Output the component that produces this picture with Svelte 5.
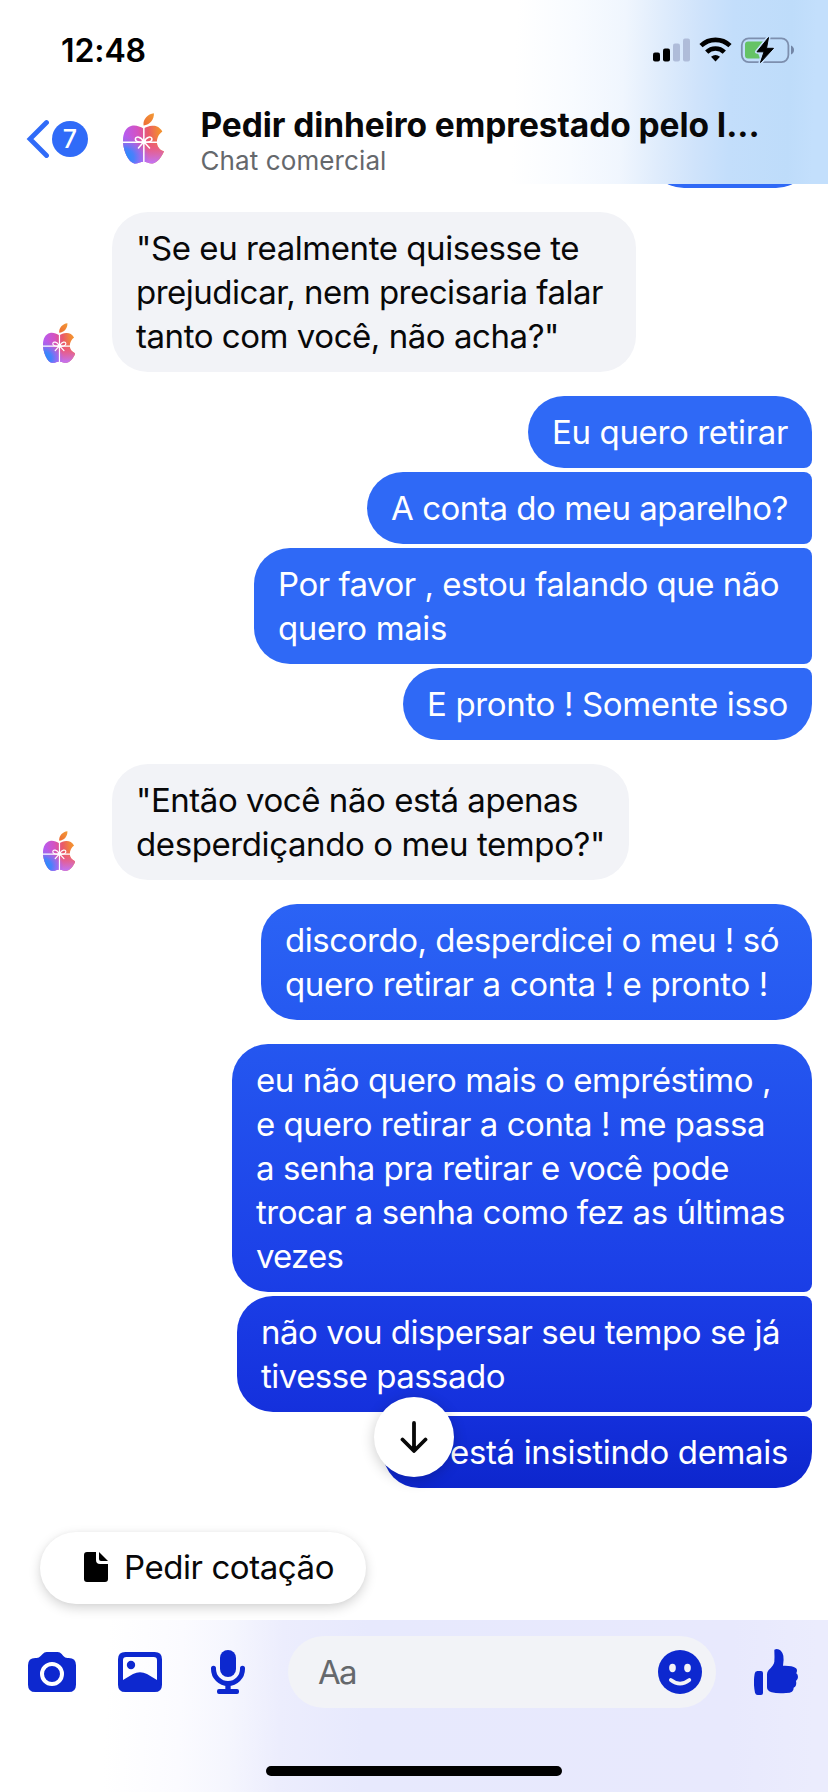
<script>
  const groups = [
    {
      side: 'in',
      items: [
        {
          w: 524,
          lines: [
            ['"Se eu realmente quisesse te', 443],
            ['prejudicar, nem precisaria falar', 467],
            ['tanto com você, não acha?"', 423]
          ]
        }
      ]
    },
    {
      side: 'out',
      items: [
        { w: 284, lines: [['Eu quero retirar', 236]] },
        { w: 445, lines: [['A conta do meu aparelho?', 397]] },
        { w: 558, lines: [['Por favor , estou falando que não', 501], ['quero mais', 169]] },
        { w: 409, lines: [['E pronto ! Somente isso', 361]] }
      ]
    },
    {
      side: 'in',
      items: [{ w: 517, lines: [['"Então você não está apenas', 442], ['desperdiçando o meu tempo?"', 469]] }]
    },
    {
      side: 'out',
      items: [{ w: 551, lines: [['discordo, desperdicei o meu ! só', 494], ['quero retirar a conta ! e pronto !', 483]] }]
    },
    {
      side: 'out',
      items: [
        {
          w: 580,
          lines: [
            ['eu não quero mais o empréstimo ,', 515],
            ['e quero retirar a conta ! me passa', 509],
            ['a senha pra retirar e você pode', 473],
            ['trocar a senha como fez as últimas', 529],
            ['vezes', 87]
          ]
        },
        { w: 575, lines: [['não vou dispersar seu tempo se já', 519], ['tivesse passado', 244]] },
        { w: 429, end: true, lines: [['está insistindo demais', 338]] }
      ]
    }
  ];

  // Tracks a line of text so that its advance equals the given width.
  function fit(node, width) {
    const natural = node.getBoundingClientRect().width;
    const count = [...node.textContent].length;
    node.style.letterSpacing = `${(width - natural) / count}px`;
  }
</script>

{#snippet logo(id, size)}
  <svg class="logo" width={size} height={size * 1.25} viewBox="38 38 122 152.5">
    <defs>
      <linearGradient id="{id}a" x1="0" y1="0.1" x2="1" y2="0">
        <stop offset="0" stop-color="#b65cf2" />
        <stop offset="0.35" stop-color="#d452c0" />
        <stop offset="0.6" stop-color="#ea5a68" />
        <stop offset="0.85" stop-color="#f28a35" />
        <stop offset="1" stop-color="#f39a2c" />
      </linearGradient>
      <linearGradient id="{id}e" x1="0" y1="0" x2="0" y2="1">
        <stop offset="0.3" stop-color="#ee5570" stop-opacity="0" />
        <stop offset="0.6" stop-color="#e85c8c" stop-opacity="0.85" />
        <stop offset="1" stop-color="#c074f8" />
      </linearGradient>
      <radialGradient id="{id}b" cx="0.02" cy="0.85" r="0.62">
        <stop offset="0" stop-color="#1a90fc" />
        <stop offset="0.4" stop-color="#4a80fb" />
        <stop offset="0.7" stop-color="#8c6cf8" stop-opacity="0.8" />
        <stop offset="1" stop-color="#b060f5" stop-opacity="0" />
      </radialGradient>
      <linearGradient id="{id}d" x1="0" y1="1" x2="1" y2="0">
        <stop offset="0" stop-color="#ee6b35" />
        <stop offset="1" stop-color="#f29a35" />
      </linearGradient>
      <path
        id="{id}p"
        d="M99 84C88 78 76 73 64 76C47 80 38 97 38 120C38 150 55 186 72 188C82 189 90 183 99 183C108 183 116 189 126 188C140 187 154 168 160 152C146 147 139 138 139 124C139 110 146 100 155 93C148 80 136 75 125 76C115 76 107 81 99 84Z"
      />
    </defs>
    <use href="#{id}p" fill="url(#{id}a)" />
    <use href="#{id}p" fill="url(#{id}e)" />
    <use href="#{id}p" fill="url(#{id}b)" />
    <path d="M99 75C97 56 112 41 130 39C131 57 118 74 99 75Z" fill="url(#{id}d)" />
    <g fill="none" stroke="#fff" stroke-width="4.5" stroke-linecap="round">
      <path d="M100 78V190M36 125H142" />
      <path
        d="M98 124C86 126 74 124 75 115C76 107 92 107 98 122M102 124C114 126 125 124 124 115C123 107 108 107 102 122M98 126L84 142M102 126L117 142"
      />
    </g>
    <circle cx="100" cy="124" r="7" fill="#fff" />
  </svg>
{/snippet}

<div class="screen">
  <header>
    <div class="status">
      <div class="time"><span use:fit={85}>12:48</span></div>
      <svg width="142" height="26" viewBox="653 36.5 142 26">
        <rect x="653" y="52" width="7" height="9" rx="2" />
        <rect x="663" y="48" width="7" height="13" rx="2" />
        <g fill="#afbcd9">
          <rect x="673" y="43" width="7" height="18" rx="2" />
          <rect x="683" y="38" width="7" height="23" rx="2" />
        </g>
        <g fill="none" stroke="#000" stroke-width="4.6">
          <path d="M701 45.2A21 21 0 0 1 730 45.2" />
          <path d="M706.7 51.6A12.6 12.6 0 0 1 724.3 51.6" />
        </g>
        <path d="M711 56.3Q715.500 52.600 720 56.3L715.5 61Z" />
        <rect x="741.8" y="37.8" width="46.6" height="23.8" rx="7" fill="none" stroke="#7d8fae" stroke-width="1.8" />
        <path d="M791 45V54Q794 52.5 794 49.5T791 45Z" fill="#7386a6" />
        <path d="M748 41H763L757 50L760 58H748Q745 58 745 55V44Q745 41 748 41Z" fill="#65c366" />
        <path
          d="M768.5 37L757 51.3H763.5L760.5 62L773.5 47.5H766.5Z"
          stroke="#c3defb"
          stroke-width="4"
          stroke-linejoin="round"
        />
        <path d="M768.5 37L757 51.3H764L760.5 62L773.5 47.8H766.5Z" stroke="#000" stroke-linejoin="round" />
      </svg>
    </div>
    <div class="bar">
      <svg class="back" width="24" height="44" viewBox="0 0 24 44">
        <path d="M21.5 5.500L5 22L21.5 38.5" fill="none" stroke="#306bf8" stroke-width="4.8" stroke-linecap="round" />
      </svg>
      <div class="count">7</div>
      {@render logo('h', 41)}
      <div class="names">
        <div class="title"><span use:fit={559}>Pedir dinheiro emprestado pelo I...</span></div>
        <div class="sub"><span use:fit={186}>Chat comercial</span></div>
      </div>
    </div>
  </header>

  <main>
    <div class="group out"><div class="bubble cut"></div></div>
    {#each groups as g, gi}
      <div class="group {g.side}">
        {#if g.side === 'in'}
          <div class="avatar">{@render logo('g' + gi, 32.4)}</div>
        {/if}
        {#each g.items as b}
          <div class="bubble" class:end={b.end} style="width: {b.w}px">
            {#each b.lines as [text, width]}
              <div class="line"><span use:fit={width}>{text}</span></div>
            {/each}
          </div>
        {/each}
      </div>
    {/each}
    <button class="chip">
      <svg width="24" height="30" viewBox="0 0 24 30">
        <path d="M3 0H12V8Q12 12 16 12H24V27Q24 30 21 30H3Q0 30 0 27V3Q0 0 3 0Z" />
        <path d="M15 0L24 9H17Q15 9 15 7Z" />
      </svg>
      <span use:fit={210}>Pedir cotação</span>
    </button>
    <button class="down" aria-label="Rolar para baixo">
      <svg width="28" height="32" viewBox="0 0 28 32">
        <path
          d="M14 2V29M2.5 18.5L14 30L25.5 18.5"
          fill="none"
          stroke="#080808"
          stroke-width="3.8"
          stroke-linecap="round"
          stroke-linejoin="round"
        />
      </svg>
    </button>
  </main>

  <footer>
    <div class="tools">
      <svg width="48" height="40" viewBox="84 816 144 120">
        <path
          fill-rule="evenodd"
          d="M140 816H173Q180 816 185 822L190 828Q195 834 202 834H206Q228 834 228 856V914Q228 936 206 936H106Q84 936 84 914V856Q84 834 106 834H110Q117 834 122 828L128 822Q133 816 140 816ZM156 846A36 36 0 1 0 156 918A36 36 0 1 0 156 846ZM156 858A24 24 0 1 1 156 906A24 24 0 1 1 156 858Z"
        />
      </svg>
      <svg width="44" height="40" viewBox="354 816 132 120">
        <path
          fill-rule="evenodd"
          d="M376 816H464Q486 816 486 838V914Q486 936 464 936H376Q354 936 354 914V838Q354 816 376 816ZM379 831Q369 831 369 841V900L399 882Q420 871 441 882L471 900V841Q471 831 461 831Z"
        />
        <circle cx="393" cy="855" r="12.5" />
      </svg>
      <svg width="34" height="44" viewBox="633 810 102 132">
        <rect x="660" y="810" width="48" height="81" rx="24" />
        <path d="M640.5 865V867A43.5 43.5 0 0 0 727.5 867V865" fill="none" stroke="#0d28cf" stroke-width="15" stroke-linecap="round" />
        <path d="M676 912H692V927H711Q717 927 717 933V936Q717 942 711 942H657Q651 942 651 936V933Q651 927 657 927H676Z" />
      </svg>
    </div>
    <div class="input">
      <span use:fit={38}>Aa</span>
      <svg width="44" height="44" viewBox="732 810 132 132">
        <circle cx="798" cy="876" r="66" />
        <g fill="#f2f3f7">
          <ellipse cx="775.5" cy="864" rx="10" ry="12.5" />
          <ellipse cx="820.5" cy="864" rx="10" ry="12.5" />
        </g>
        <path d="M770.5 900Q798 922 826 900" fill="none" stroke="#f2f3f7" stroke-width="11" stroke-linecap="round" />
      </svg>
    </div>
    <svg class="like" width="44" height="46" viewBox="1020 804 132 138">
      <path d="M1030 870H1041Q1047 870 1047 876V936Q1047 942 1041 942H1031Q1025 942 1023 935Q1017 907 1022 878Q1023 870 1030 870Z" />
      <path
        d="M1081 809Q1080 804 1088 804Q1103 805 1108 824Q1110 835 1107 854Q1134 853 1145 861Q1151 865 1148 874Q1147 876 1147 877Q1152 881 1152 888Q1152 895 1146 900Q1148 908 1146 913Q1144 918 1139 920Q1139 929 1134 932Q1129 936 1116 936Q1090 938 1073 934Q1059 930 1059 919V880Q1059 872 1064 867Q1080 852 1081 842Q1082 829 1081 809Z"
      />
    </svg>
    <div class="home"></div>
  </footer>
</div>

<style>
  :global(body) {
    background: #fff;
  }
  .screen {
    width: 828px;
    height: 1792px;
    display: flex;
    flex-direction: column;
    overflow: hidden;
    font-family: Inter, 'Liberation Sans', sans-serif;
    font-size: 33px;
    color: #080809;
  }
  svg {
    display: block;
    flex: none;
  }
  span {
    white-space: pre;
  }
  button {
    border: 0;
    padding: 0;
    font: inherit;
    color: inherit;
    background: #fff;
  }
  header {
    height: 184px;
    flex: none;
    box-sizing: border-box;
    padding-top: 30px;
    background: linear-gradient(
      92deg,
      #fff 62%,
      #f8fbff 69%,
      #f0f6fe 75%,
      #dfecfc 79.5%,
      #cfe3fb 84%,
      #c3defb 88%,
      #bedcfa 95%,
      #c3dffc 98%
    );
  }
  .status {
    height: 40px;
    padding: 0 33px 0 61px;
    display: flex;
    justify-content: space-between;
    align-items: center;
  }
  .time {
    font-size: 32px;
    font-weight: 600;
    color: #000;
  }
  .bar {
    height: 78px;
    padding-left: 25px;
    display: flex;
    align-items: flex-start;
  }
  .bar .back {
    margin-top: 47px;
  }
  .count {
    width: 36px;
    height: 36px;
    margin: 51px 0 0 3px;
    border-radius: 50%;
    background: #306bf8;
    color: #fff;
    font-size: 25px;
    font-weight: 500;
    line-height: 37px;
    text-align: center;
  }
  .bar .logo {
    margin: 43px 0 0 34.5px;
  }
  .names {
    margin: 35px 0 0 37px;
  }
  .title {
    font-weight: 650;
    font-size: 33.5px;
    line-height: 40px;
  }
  .sub {
    font-size: 26px;
    line-height: 32px;
    color: #65686c;
  }
  main {
    position: relative;
    height: 1436px;
    flex: none;
    box-sizing: border-box;
    padding: 0 16px;
    display: flex;
    flex-direction: column;
    gap: 24px;
    overflow: hidden;
  }
  .group {
    display: flex;
    flex-direction: column;
    gap: 4px;
    align-items: flex-end;
  }
  .group.in {
    flex-direction: row;
    gap: 0;
  }
  .avatar {
    width: 69px;
    padding: 0 0 9px 27px;
    box-sizing: border-box;
    margin-right: 27px;
  }
  .bubble {
    box-sizing: border-box;
    padding: 14px 24px;
    border-radius: 36px;
    line-height: 44px;
    background: #f2f3f7;
  }
  .line {
    height: 44px;
  }
  .out .bubble {
    color: #fff;
    background: linear-gradient(
        #2f69f6 0,
        #2f69f6 740px,
        #2b63f5 904px,
        #2558f0 1030px,
        #1c41e8 1260px,
        #1531dd 1405px,
        #0d26cd 1490px
      )
      0 0 / 828px 1792px fixed;
  }
  .out .bubble:not(:last-child) {
    border-bottom-right-radius: 8px;
  }
  .out .bubble:not(:first-child) {
    border-top-right-radius: 8px;
  }
  .cut {
    width: 164px;
    height: 72px;
    margin-top: -68px;
  }
  .end {
    text-align: right;
  }
  .chip {
    align-self: flex-start;
    margin: 20px 0 0 24px;
    width: 326px;
    height: 72px;
    border-radius: 36px;
    display: flex;
    align-items: center;
    gap: 16px;
    padding: 0 0 2px 44px;
    box-sizing: border-box;
    box-shadow:
      0 4px 12px rgba(0, 0, 0, 0.17),
      0 0 4px rgba(0, 0, 0, 0.03);
  }
  .down {
    position: absolute;
    left: 374px;
    top: 1213px;
    width: 80px;
    height: 80px;
    border-radius: 50%;
    display: flex;
    align-items: center;
    justify-content: center;
    box-shadow: 0 3px 14px rgba(0, 0, 0, 0.2);
  }
  footer {
    height: 172px;
    box-sizing: border-box;
    padding: 16px 30px 0 28px;
    display: flex;
    flex-wrap: wrap;
    align-content: flex-start;
    align-items: center;
    fill: #0d28cf;
    background: linear-gradient(
      92deg,
      #fff 13%,
      #fbfbff 22%,
      #f5f6fe 28%,
      #ecedfd 34%,
      #e7e9fd 44%,
      #e8e9fd 88%,
      #ebecfd 98%
    );
  }
  .tools {
    width: 260px;
    display: flex;
    align-items: center;
  }
  .tools svg:nth-child(2) {
    margin-left: 42px;
  }
  .tools svg:nth-child(3) {
    margin-left: 49px;
  }
  .input {
    width: 428px;
    height: 72px;
    box-sizing: border-box;
    padding: 0 14px 0 30px;
    border-radius: 36px;
    background: #f2f3f7;
    color: #65686c;
    display: flex;
    align-items: center;
    justify-content: space-between;
  }
  .like {
    margin-left: 38px;
  }
  .home {
    width: 296px;
    height: 10px;
    margin: 58px 0 0 238px;
    border-radius: 5px;
    background: #000;
  }
</style>
